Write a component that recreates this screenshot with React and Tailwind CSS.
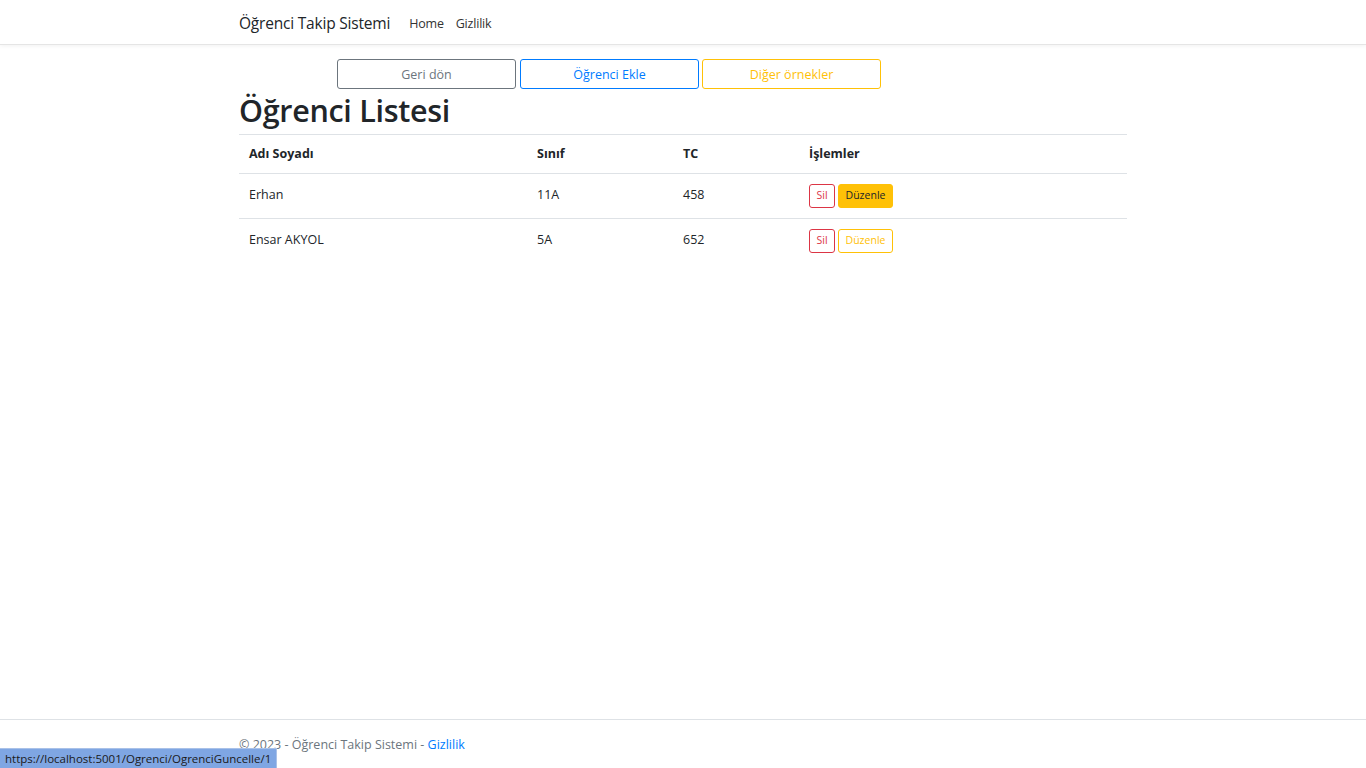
import React from 'react';

const students = [
  { name: 'Erhan', sinif: '11A', tc: '458', solid: true },
  { name: 'Ensar AKYOL', sinif: '5A', tc: '652', solid: false },
];

export default function App() {
  return (
    <div className="min-h-[768px] bg-white flex flex-col text-[#212529] font-['Open_Sans',sans-serif]">
      {/* Navbar */}
      <header className="h-[45px] border-b border-[#e5e5e5] shadow-[0_1px_4px_rgba(0,0,0,0.06)]">
        <div className="w-[888px] mx-auto flex items-center h-full pt-[4px]">
          <span className="text-[15.5px] mr-[19px] tracking-[-0.2px]">Öğrenci Takip Sistemi</span>
          <nav className="flex gap-[12px] text-[12.5px] text-[#333] tracking-[-0.2px]">
            <a>Home</a>
            <a>Gizlilik</a>
          </nav>
        </div>
      </header>

      {/* Main */}
      <main className="flex-1 w-[888px] mx-auto">
        <div className="flex ml-[98px] mt-[14px]">
          <button className="w-[179px] h-[30px] pt-[2px] border border-[#6c757d] rounded-[3px] text-[12.5px] text-[#6c757d]">Geri dön</button>
          <button className="w-[179px] h-[30px] pt-[2px] ml-[4px] border border-[#007bff] rounded-[3px] text-[12.5px] text-[#007bff]">Öğrenci Ekle</button>
          <button className="w-[179px] h-[30px] pt-[2px] ml-[3px] border border-[#ffc107] rounded-[3px] text-[12.5px] text-[#ffc107]">Diğer örnekler</button>
        </div>
        <h1 className="text-[30.5px] font-semibold leading-[44px] -mt-[1px] mb-[2px] tracking-[-0.3px]">Öğrenci Listesi</h1>
        <table className="w-full text-[12.5px] border-collapse">
          <thead>
            <tr className="border-t border-b border-[#dee2e6] h-[39px]">
              <th className="text-left font-bold pl-[10px] w-[288px]">Adı Soyadı</th>
              <th className="text-left font-bold pl-[10px] w-[146px]">Sınıf</th>
              <th className="text-left font-bold pl-[10px] w-[126px]">TC</th>
              <th className="text-left font-bold pl-[10px]">İşlemler</th>
            </tr>
          </thead>
          <tbody>
            {students.map((s, i) => (
              <tr key={i} className={`h-[45px] ${i === 0 ? 'border-b border-[#dee2e6]' : ''}`}>
                <td className="pl-[10px] align-top pt-[12px]">{s.name}</td>
                <td className="pl-[10px] align-top pt-[12px]">{s.sinif}</td>
                <td className="pl-[10px] align-top pt-[12px]">{s.tc}</td>
                <td className="pl-[10px] align-top pt-[10px]">
                  <div className="flex gap-[3px]">
                    <button className="w-[26px] h-[24px] border border-[#dc3545] rounded-[3px] text-[10.5px] text-[#dc3545]">Sil</button>
                    {s.solid ? (
                      <button className="w-[55px] h-[24px] border border-[#ffc107] bg-[#ffc107] rounded-[3px] text-[10.5px] text-[#212529]">Düzenle</button>
                    ) : (
                      <button className="w-[55px] h-[24px] border border-[#ffc107] rounded-[3px] text-[10.5px] text-[#ffc107]">Düzenle</button>
                    )}
                  </div>
                </td>
              </tr>
            ))}
          </tbody>
        </table>
      </main>

      {/* Footer */}
      <footer className="h-[49px] border-t border-[#dee2e6]">
        <div className="w-[888px] mx-auto pt-[16px] text-[12.5px] text-[#6c757d]">
          © 2023 - Öğrenci Takip Sistemi - <a className="text-[#007bff]">Gizlilik</a>
        </div>
      </footer>

      {/* Status bar overlay */}
      <div className="fixed left-0 bottom-0 h-[20px] px-[5px] bg-[#7fa6e3] border-t border-r border-[#a9c1e8] text-[11.5px] leading-[19px] text-[#1a1a1a]">
        https://localhost:5001/Ogrenci/OgrenciGuncelle/1
      </div>
    </div>
  );
}
